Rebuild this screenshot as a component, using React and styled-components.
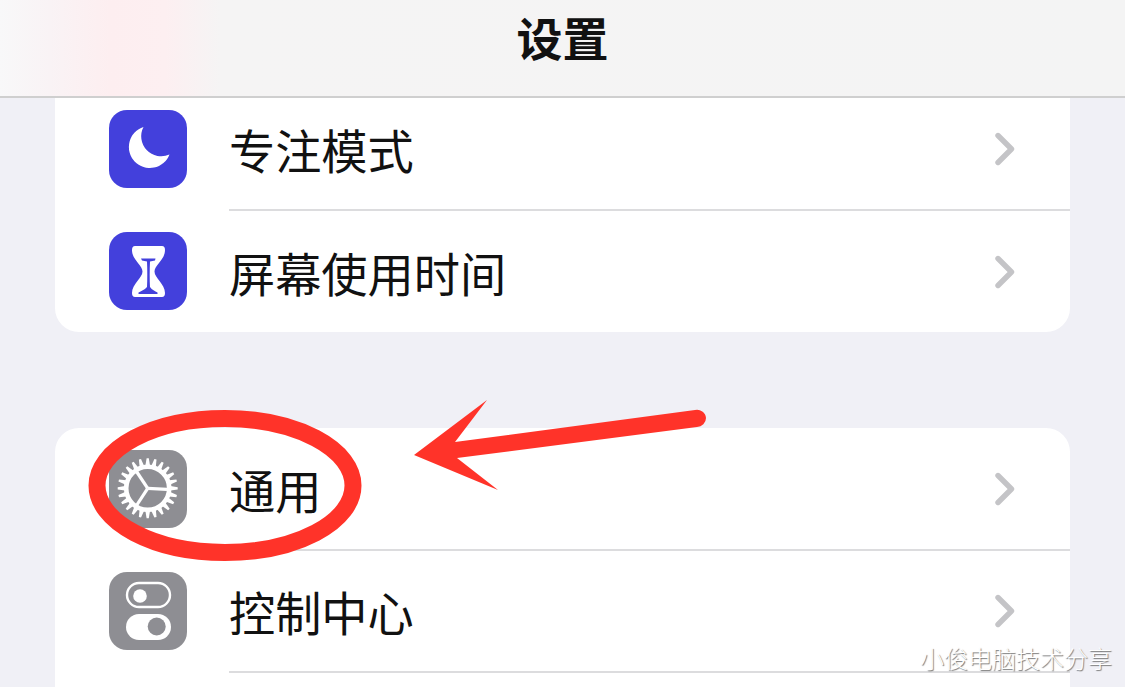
import React from 'react';
import styled, { createGlobalStyle } from 'styled-components';

const Global = createGlobalStyle`
  html, body {
    margin: 0;
    padding: 0;
    background: #f0f0f6;
  }
  * {
    box-sizing: border-box;
  }
`;

const Screen = styled.div`
  position: relative;
  width: 1125px;
  height: 687px;
  overflow: hidden;
  background: #f0f0f6;
  font-family: "Noto Sans CJK SC", "Noto Sans", sans-serif;
  color: #0a0a0a;
`;

const NavBar = styled.header`
  position: relative;
  z-index: 1;
  height: 98px;
  display: flex;
  align-items: center;
  justify-content: center;
  padding-bottom: 24px;
  border-bottom: 2px solid #cfcfcf;
  background: linear-gradient(90deg, #f8f8f9 0, #f9f3f5 50px, #fdeef0 110px, #fdeff1 165px, #f5f4f4 220px, #f4f4f4 100%);
`;

const Title = styled.h1`
  margin: 0;
  font-size: 46px;
  line-height: 1;
  font-weight: 700;
  color: #111;
`;

const Sections = styled.main`
  display: flex;
  flex-direction: column;
  gap: 96px;
  margin-top: -9px;
  padding: 0 55px;
`;

const Card = styled.section`
  background: #fff;
  border-radius: ${p => (p.$scrolled ? '0 0 24px 24px' : '24px')};
  height: ${p => (p.$scrolled ? '243px' : 'auto')};
  padding-top: ${p => (p.$scrolled ? '0' : '1px')};
  padding-bottom: ${p => (p.$scrolled ? '0' : '40px')};
  overflow: hidden;
`;

const Row = styled.div`
  height: 122px;
  display: flex;
  align-items: center;
  padding-left: 54px;
  gap: 42px;
`;

const Tile = styled.div`
  flex: none;
  width: 78px;
  height: 78px;
  border-radius: 18px;
  background: ${p => p.$tone};
  display: flex;
  margin-top: -2px;
`;

const RowBody = styled.div`
  flex: 1;
  height: 100%;
  display: flex;
  align-items: center;
  justify-content: space-between;
  padding-right: 55px;
  border-bottom: ${p => (p.$last ? '0' : '2px solid #dcdcde')};
`;

const Label = styled.span`
  font-size: 46.2px;
  line-height: 1;
  font-weight: 400;
  color: #111;
`;

const Watermark = styled.div`
  position: absolute;
  z-index: 3;
  right: 13px;
  bottom: 17px;
  font-size: 24px;
  line-height: 1;
  font-weight: 300;
  color: #fff;
  text-shadow: 1px 1px 1px #777;
`;

const Overlay = styled.svg`
  position: absolute;
  z-index: 2;
  left: 0;
  top: 0;
  pointer-events: none;
`;

const INDIGO = '#4340dc';
const GRAY = '#8e8e93';

const Moon = () => (
  <svg width="78" height="78" viewBox="0 0 78 78">
    <path d="M34.5 17A21 21 0 1 0 60.5 44.5A20 20 0 0 1 34.5 17Z" fill="#fff" />
  </svg>
);

const Hourglass = () => (
  <svg width="78" height="78" viewBox="0 0 78 78">
    <path
      d="M26 14H53Q56 14 56 18C56 28 45.5 33 45.5 39.5C45.5 46 56 52 56 61Q56 65 53 65H26Q23 65 23 61C23 52 33.5 46 33.5 39.5C33.5 33 23 28 23 18Q23 14 26 14Z"
      fill="#fff"
    />
    <path
      d="M32 26.5H46.5L46 28.5L41 29.5C40.6 38 40.6 48 41 55C43 58 46 59 48.5 60.5V62H29.5V60.5C32 59 35.5 58 38 55C38.4 48 38.4 38 38 29.5L33 28.5Z"
      fill={INDIGO}
    />
  </svg>
);

const teeth = Array.from({ length: 24 }, (_, i) => i * 15);

const Gear = () => (
  <svg width="78" height="78" viewBox="0 0 78 78">
    <circle cx="38.7" cy="38.3" r="21.5" fill="none" stroke="#fff" strokeWidth="4.6" />
    {teeth.map(a => (
      <polygon
        key={a}
        points="36.4,15.5 37.6,8.3 39.8,8.3 41,15.5"
        fill="#fff"
        transform={`rotate(${a} 38.7 38.3)`}
      />
    ))}
    <g stroke="#fff" strokeWidth="3.2">
      <line x1="38.7" y1="38.3" x2="58" y2="39.3" />
      <line x1="38.7" y1="38.3" x2="27.5" y2="21.5" />
      <line x1="38.7" y1="38.3" x2="27.5" y2="55.5" />
    </g>
  </svg>
);

const Toggles = () => (
  <svg width="78" height="78" viewBox="0 0 78 78">
    <rect x="18" y="11" width="43" height="24" rx="12" fill="none" stroke="#fff" strokeWidth="2.4" />
    <circle cx="31" cy="24" r="6.8" fill="#fff" />
    <rect x="17" y="42" width="45" height="26" rx="13" fill="#fff" />
    <circle cx="47.7" cy="54.5" r="9" fill={GRAY} />
  </svg>
);

const Chevron = () => (
  <svg width="20" height="34" viewBox="0 0 20 34">
    <path d="M3 3.5L16.5 17L3 30.5" fill="none" stroke="#c4c4c7" strokeWidth="5.4" strokeLinecap="round" strokeLinejoin="round" />
  </svg>
);

const sections = [
  [
    { label: '专注模式', tone: INDIGO, icon: <Moon /> },
    { label: '屏幕使用时间', tone: INDIGO, icon: <Hourglass /> },
  ],
  [
    { label: '通用', tone: GRAY, icon: <Gear /> },
    { label: '控制中心', tone: GRAY, icon: <Toggles /> },
  ],
];

const Annotation = () => (
  <Overlay width="1125" height="687" viewBox="0 0 1125 687">
    <ellipse cx="225" cy="485.5" rx="128" ry="67" fill="none" stroke="#ff3329" strokeWidth="17" />
    <path
      d="M414 455L487 400L455 442L695 410A9 9 0 0 1 706 418A9 9 0 0 1 697 427L457 458L498 490Z"
      fill="#ff3329"
    />
  </Overlay>
);

export default function App() {
  return (
    <Screen>
      <Global />
      <NavBar>
        <Title>设置</Title>
      </NavBar>
      <Sections>
        {sections.map((rows, i) => (
          <Card key={i} $scrolled={i === 0}>
            {rows.map((row, j) => (
              <Row key={row.label}>
                <Tile $tone={row.tone}>{row.icon}</Tile>
                <RowBody $last={i === 0 && j === rows.length - 1}>
                  <Label>{row.label}</Label>
                  <Chevron />
                </RowBody>
              </Row>
            ))}
          </Card>
        ))}
      </Sections>
      <Annotation />
      <Watermark>小俊电脑技术分享</Watermark>
    </Screen>
  );
}
